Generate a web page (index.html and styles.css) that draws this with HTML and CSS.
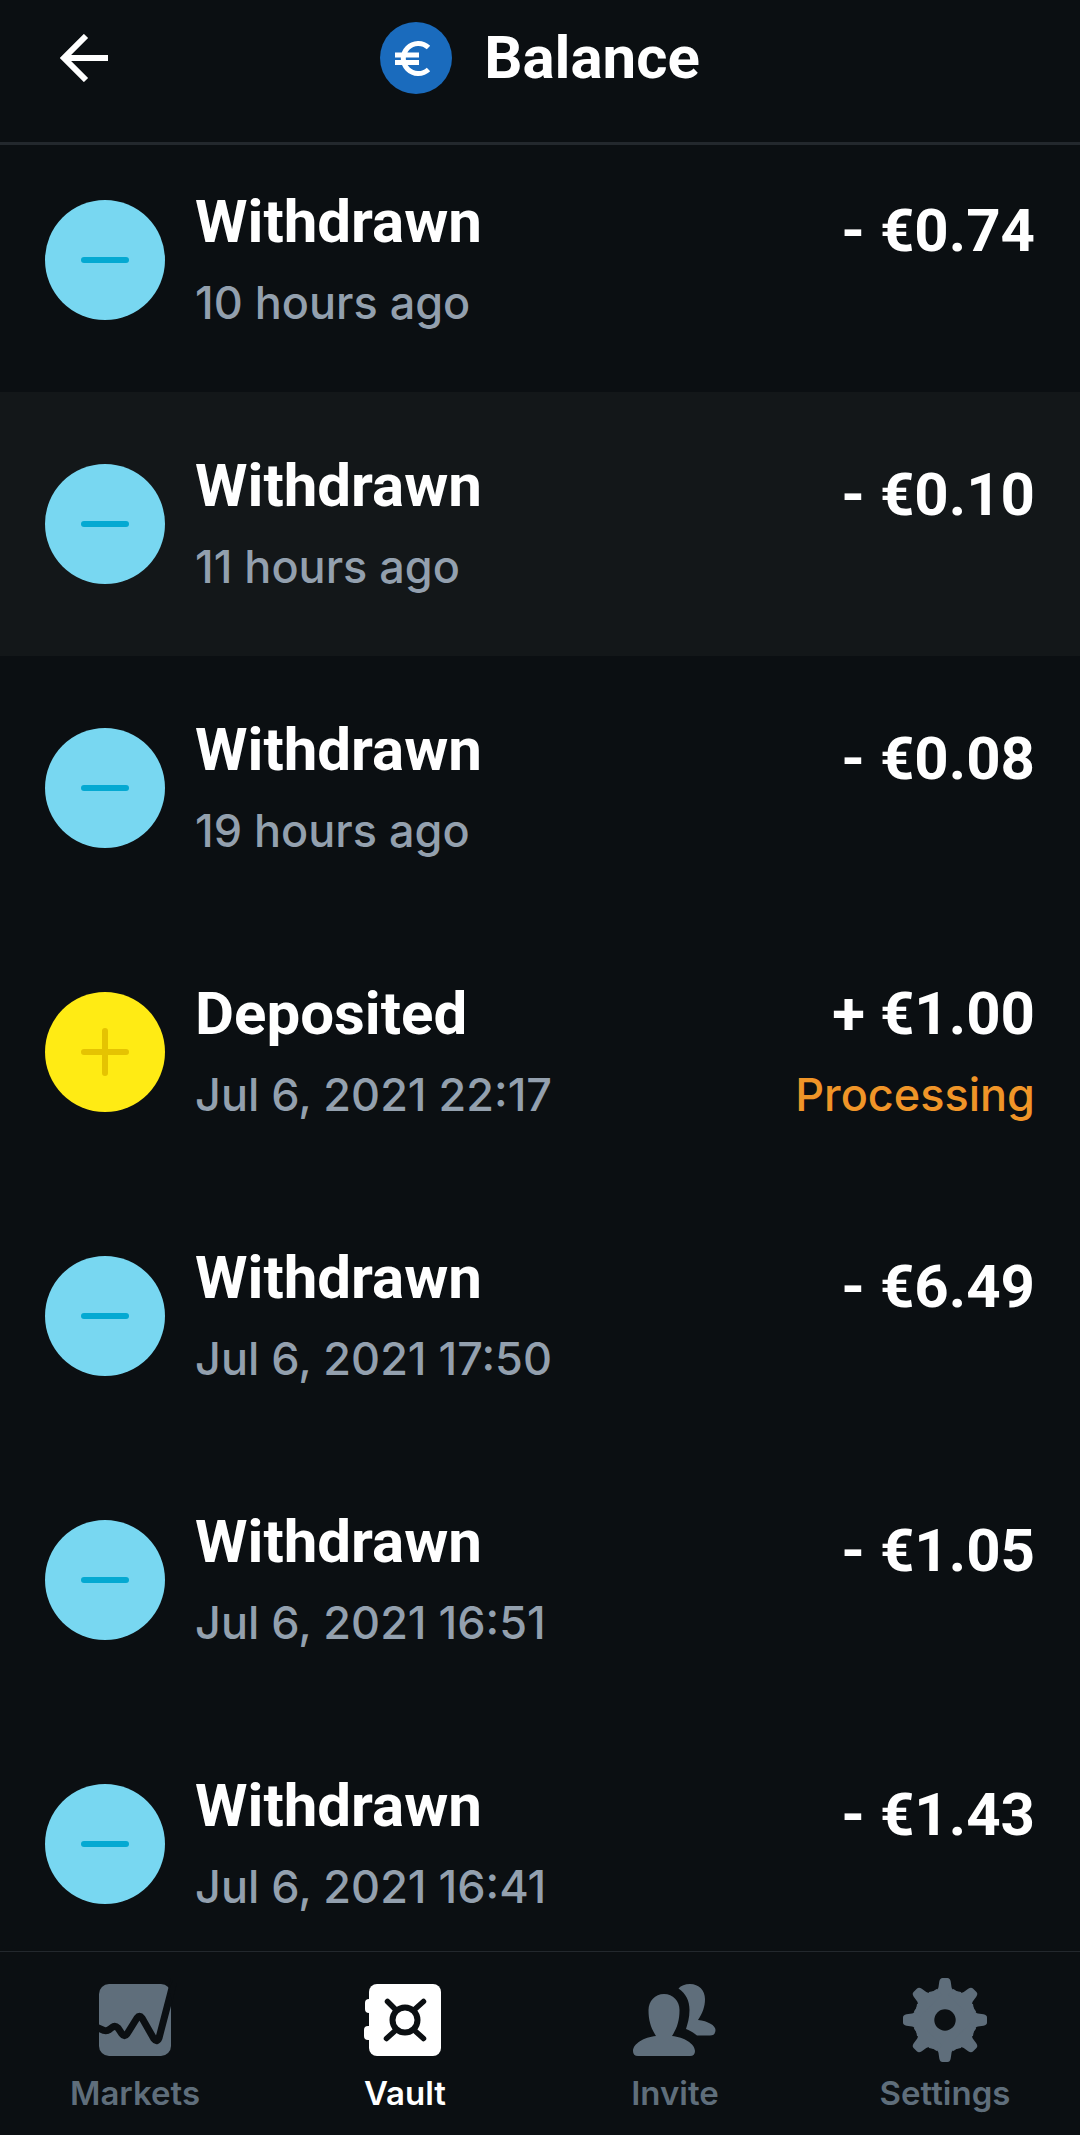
FILE: index.html
```html
<!DOCTYPE html>
<html lang="en">
<head>
<meta charset="utf-8">
<meta name="viewport" content="width=device-width, initial-scale=1">
<title>Balance</title>
<link rel="stylesheet" href="styles.css">
</head>
<body>
<svg class="symbols" aria-hidden="true">
  <symbol id="minus" viewBox="0 0 120 120"><path d="M39 60H81"/></symbol>
  <symbol id="plus" viewBox="0 0 120 120"><path d="M39 60H81M60 39V81"/></symbol>
</svg>

<header class="header">
  <button class="back" type="button" aria-label="Back">
    <svg viewBox="0 0 48 48"><path d="M26 2 4 24 26 46M4 24H48"/></svg>
  </button>
  <div class="heading">
    <svg class="coin" viewBox="0 0 72 72" aria-hidden="true">
      <circle cx="36" cy="36" r="36"/>
      <path d="M48.500 25.500A15 15 0 1 0 48.500 47.500M15 33H39M15 40.500H39"/>
    </svg>
    <h1 class="title">Balance</h1>
  </div>
</header>

<main>
  <ul class="list">
    <li class="row">
      <svg class="badge withdrawn" aria-hidden="true"><use href="#minus"/></svg>
      <div class="info"><h2 class="kind">Withdrawn</h2><p class="time">10 hours ago</p></div>
      <div class="value"><p class="amount">- €0.74</p></div>
    </li>
    <li class="row active">
      <svg class="badge withdrawn" aria-hidden="true"><use href="#minus"/></svg>
      <div class="info"><h2 class="kind">Withdrawn</h2><p class="time">11 hours ago</p></div>
      <div class="value"><p class="amount">- €0.10</p></div>
    </li>
    <li class="row">
      <svg class="badge withdrawn" aria-hidden="true"><use href="#minus"/></svg>
      <div class="info"><h2 class="kind">Withdrawn</h2><p class="time">19 hours ago</p></div>
      <div class="value"><p class="amount">- €0.08</p></div>
    </li>
    <li class="row">
      <svg class="badge deposited" aria-hidden="true"><use href="#plus"/></svg>
      <div class="info"><h2 class="kind">Deposited</h2><p class="time">Jul 6, 2021 22:17</p></div>
      <div class="value with-status"><p class="amount">+ €1.00</p><p class="status">Processing</p></div>
    </li>
    <li class="row">
      <svg class="badge withdrawn" aria-hidden="true"><use href="#minus"/></svg>
      <div class="info"><h2 class="kind">Withdrawn</h2><p class="time">Jul 6, 2021 17:50</p></div>
      <div class="value"><p class="amount">- €6.49</p></div>
    </li>
    <li class="row">
      <svg class="badge withdrawn" aria-hidden="true"><use href="#minus"/></svg>
      <div class="info"><h2 class="kind">Withdrawn</h2><p class="time">Jul 6, 2021 16:51</p></div>
      <div class="value"><p class="amount">- €1.05</p></div>
    </li>
    <li class="row">
      <svg class="badge withdrawn" aria-hidden="true"><use href="#minus"/></svg>
      <div class="info"><h2 class="kind">Withdrawn</h2><p class="time">Jul 6, 2021 16:41</p></div>
      <div class="value"><p class="amount">- €1.43</p></div>
    </li>
  </ul>
</main>

<nav class="tabs">
  <a class="tab" href="#markets">
    <svg class="tab-icon" viewBox="0 0 84 84" aria-hidden="true">
      <rect x="6" y="6" width="72" height="72" rx="10"/>
      <path class="cut" stroke-width="7" d="M3 49 11 52.500Q14 53.500 17 51L19 49.500Q22 47 25 50L29 56Q31.500 59.500 34 56L44 40Q46.500 36.500 49 40L61 61Q64 65 66 60L77.500 16 82 -2"/>
      <path class="gap" d="M76 12 80 2V26Z"/>
    </svg>
    <span>Markets</span>
  </a>
  <a class="tab current" href="#vault" aria-current="page">
    <svg class="tab-icon" viewBox="0 0 84 84" aria-hidden="true">
      <rect x="6" y="6" width="72" height="72" rx="8"/>
      <rect x="2" y="21" width="12" height="14" rx="4"/>
      <rect x="1" y="48" width="12" height="14" rx="4"/>
      <circle class="cut" cx="42" cy="42" r="12.500" stroke-width="6"/>
      <path class="cut" stroke-width="5.500" d="M24.500 23.500 33 32M60.500 23.500 51 32M23.500 60.500 33 52M60.500 60.500 51 52"/>
    </svg>
    <span>Vault</span>
  </a>
  <a class="tab" href="#invite">
    <svg class="tab-icon" viewBox="0 0 84 84" aria-hidden="true">
      <path d="M31 16C40 16 46.500 23 46.500 32C46.500 43 44 50 39 58C51 59 62 66 62 73Q62 78 57 78H5Q0 78 0 73C0 66 11 59 23 58C18 50 15.500 43 15.500 32C15.500 23 22 16 31 16Z"/>
      <path d="M45.500 10.500C48 7.500 52 6 57 6C66 6 72 12.500 72 21C72 29 69.500 35 65 42C75 43 82.500 47.500 82.500 52Q82.500 57.500 77 57.500H64C61 55 57 52.500 53 51C54.500 46 56.500 40 56.500 32C56.500 23 53 15.500 45.500 10.500Z"/>
    </svg>
    <span>Invite</span>
  </a>
  <a class="tab" href="#settings">
    <svg class="tab-icon" viewBox="-42 -42 84 84" aria-hidden="true">
      <defs><path id="tooth" d="M-16 -28C-9 -29 -7 -30.500 -6.500 -33L-5.700 -38.500Q-5 -42 -2.500 -42H2.500Q5 -42 5.700 -38.500L6.500 -33C7 -30.500 9 -29 16 -28V-20H-16Z"/></defs>
      <circle r="30"/>
      <use href="#tooth"/>
      <use href="#tooth" transform="rotate(45)"/>
      <use href="#tooth" transform="rotate(90)"/>
      <use href="#tooth" transform="rotate(135)"/>
      <use href="#tooth" transform="rotate(180)"/>
      <use href="#tooth" transform="rotate(225)"/>
      <use href="#tooth" transform="rotate(270)"/>
      <use href="#tooth" transform="rotate(315)"/>
      <circle class="gap" r="10.700"/>
    </svg>
    <span>Settings</span>
  </a>
</nav>
</body>
</html>
```
FILE: styles.css
```css
:root {
  --bg: #0b0f12;
  --bg-active: #131719;
  --line: #23282d;
  --muted: #93a0ae;
  --tab: #5f6e7b;
}

* {
  box-sizing: border-box;
  margin: 0;
  padding: 0;
}

body {
  min-height: 100vh;
  display: flex;
  flex-direction: column;
  background: var(--bg);
  color: #fff;
  font-family: Inter, "Liberation Sans", sans-serif;
}

main {
  flex: 1;
}

.symbols {
  display: none;
}

.header {
  display: grid;
  grid-template-columns: 1fr auto 1fr;
  align-items: center;
  padding: 22px 60px 48px;
  border-bottom: 3px solid var(--line);
}

.back {
  width: 48px;
  height: 48px;
  border: 0;
  background: none;
}

.back svg {
  display: block;
  fill: none;
  stroke: #fff;
  stroke-width: 6;
}

.heading {
  display: flex;
  align-items: center;
  gap: 32px;
}

.coin {
  width: 72px;
  height: 72px;
  fill: #1a6bbd;
}

.coin path {
  fill: none;
  stroke: #fff;
  stroke-width: 5;
}

.title,
.kind,
.amount {
  font-family: Roboto, "Liberation Sans", sans-serif;
  font-size: 60px;
  font-weight: 700;
  line-height: 64px;
}

.title {
  line-height: 72px;
}

.list {
  list-style: none;
}

.row {
  display: flex;
  align-items: center;
  gap: 30px;
  padding: 62px 45px;
}

.row:first-child {
  padding-top: 45px;
}

.row:last-child {
  padding-bottom: 37px;
}

.row.active {
  background: var(--bg-active);
}

.badge {
  flex: none;
  width: 120px;
  height: 120px;
  border-radius: 50%;
  stroke-width: 6;
  stroke-linecap: round;
}

.withdrawn {
  background: #78d7f1;
  stroke: #04a9d2;
}

.deposited {
  background: #ffeb14;
  stroke: #e5c302;
}

.info,
.value {
  display: flex;
  flex-direction: column;
  gap: 22px;
}

.info {
  flex: 1;
}

.value {
  align-self: flex-start;
  padding-top: 9px;
  text-align: right;
}

.value.with-status {
  padding-top: 0;
}

.time,
.status {
  font-size: 45px;
  font-weight: 500;
  line-height: 54px;
}

.time {
  color: var(--muted);
}

.status {
  color: #f09528;
}

.tabs {
  display: grid;
  grid-template-columns: repeat(4, 1fr);
  border-top: 1px solid var(--line);
}

.tab {
  display: flex;
  flex-direction: column;
  align-items: center;
  gap: 11px;
  padding: 26px 0 22px;
  color: var(--tab);
  font-size: 33px;
  font-weight: 600;
  line-height: 40px;
  text-decoration: none;
}

.tab.current {
  color: #fff;
}

.tab-icon {
  width: 84px;
  height: 84px;
  fill: currentColor;
}

.tab-icon .cut {
  fill: none;
  stroke: var(--bg);
  stroke-linecap: round;
  stroke-linejoin: round;
}

.tab-icon .gap {
  fill: var(--bg);
}
```
